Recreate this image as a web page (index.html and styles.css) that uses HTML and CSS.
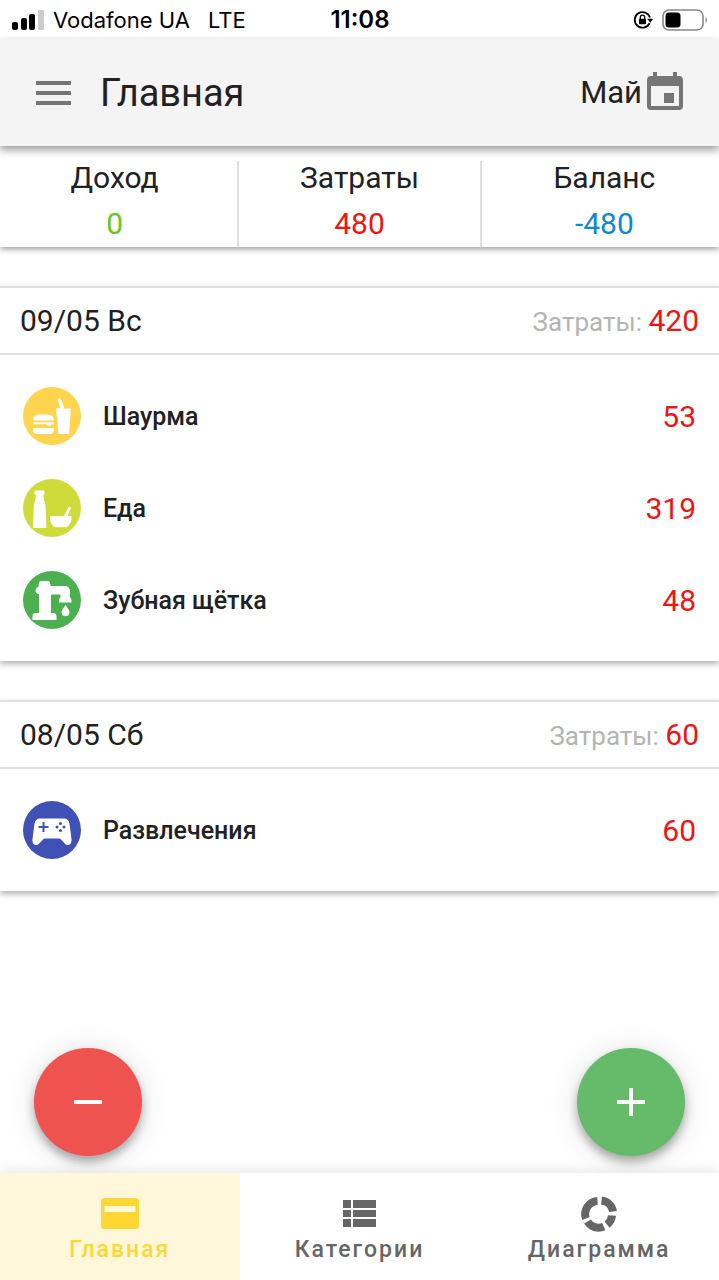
FILE: index.html
```html
<!DOCTYPE html>
<html lang="ru">
<head>
<meta charset="utf-8">
<meta name="viewport" content="width=device-width, initial-scale=1">
<title>Главная</title>
<link rel="stylesheet" href="styles.css">
</head>
<body>
<div class="app">
  <div class="status">
    <div class="status-side">
      <svg class="signal" viewBox="0 0 32 20" aria-hidden="true">
        <rect x="0" y="12" width="6" height="8" rx="2"/>
        <rect x="9" y="8" width="6" height="12" rx="2"/>
        <rect x="17" y="4" width="6" height="16" rx="2"/>
        <rect x="26" y="0" width="6" height="20" rx="1" fill="#ccc"/>
      </svg>
      <span>Vodafone UA</span>
      <span class="network">LTE</span>
    </div>
    <time class="clock">11:08</time>
    <div class="status-side status-end">
      <svg class="lock" viewBox="0 0 20 20" aria-hidden="true">
        <path d="M16.6 13.2A7.8 7.8 0 1 1 17 7.600" fill="none" stroke="#000" stroke-width="1.800"/>
        <path d="M14.200 8.800h6l-3 4z"/>
        <rect x="6" y="8.800" width="7" height="5.400" rx="1"/>
        <path d="M7.300 9V7.300a2.200 2.200 0 0 1 4.400 0V9" fill="none" stroke="#000" stroke-width="1.300"/>
      </svg>
      <svg class="battery" viewBox="0 0 46 22" aria-hidden="true">
        <rect x="1" y="1" width="40" height="20" rx="6" fill="none" stroke="#888" stroke-width="1.600"/>
        <rect x="3.500" y="3.500" width="15" height="15" rx="3.500"/>
        <path d="M43.500 8c1.800 1 1.800 5 0 6z" fill="#888"/>
      </svg>
    </div>
  </div>

  <header class="bar">
    <button class="menu" type="button" aria-label="Меню">
      <svg viewBox="0 0 36 24" aria-hidden="true"><path d="M0 0h35v4H0zM0 10h35v4H0zM0 20h35v4H0z"/></svg>
    </button>
    <h1 class="title">Главная</h1>
    <button class="month" type="button">
      <span>Май</span>
      <svg viewBox="0 0 36 40" aria-hidden="true"><path fill-rule="evenodd" d="M6 0h4v4h16V0h4v4h2a4 4 0 0 1 4 4v26a4 4 0 0 1-4 4H4a4 4 0 0 1-4-4V8a4 4 0 0 1 4-4h2zM4 14v20h28V14zM17 21h10v10H17z"/></svg>
    </button>
  </header>

  <section class="summary">
    <div class="total"><span>Доход</span><span class="income">0</span></div>
    <div class="total"><span>Затраты</span><span class="expense">480</span></div>
    <div class="total"><span>Баланс</span><span class="balance">-480</span></div>
  </section>

  <main class="days">
    <section class="day">
      <header class="day-head">
        <h2 class="date">09/05 Вс</h2>
        <p class="spent">Затраты: <span class="sum">420</span></p>
      </header>
      <ul class="items">
        <li class="item">
          <svg class="badge" viewBox="0 0 58 58" aria-hidden="true">
            <circle cx="29" cy="29" r="29" fill="#ffd54f"/>
            <g fill="#fff">
              <path d="M10 33.500c0-4 3-6 7-6h7c4 0 7 2 7 6zM10 35.200h21v2h-2.500l-2.500 2-3-2H10zM10 41h21v2c0 2.500-2 4-4 4H14c-2.500 0-4-1.500-4-4z"/>
              <path d="M33 21.500h4.500L35 13.500c-.5-2 2.300-2.800 3-1L41 20v1.500h7L46 47H35.500z"/>
            </g>
          </svg>
          <span class="name">Шаурма</span><span class="price">53</span>
        </li>
        <li class="item">
          <svg class="badge" viewBox="0 0 58 58" aria-hidden="true">
            <circle cx="29" cy="29" r="29" fill="#cddc39"/>
            <g fill="#fff">
              <path d="M11.500 11.500h10v4h-1v2.500l2 8.500L23.500 49H10l.8-22 2-9v-2.500h-1.300z"/>
              <path d="M27 37h14l4.200-8.500c1-1.500 3.200-.5 2.500 1.400L44.500 37H48.500c.5 6-2 9.500-5 11.300H32C28.500 46.500 26.500 43 27 37z"/>
            </g>
          </svg>
          <span class="name">Еда</span><span class="price">319</span>
        </li>
        <li class="item">
          <svg class="badge" viewBox="0 0 58 58" aria-hidden="true">
            <circle cx="29" cy="29" r="29" fill="#4caf50"/>
            <g fill="#fff">
              <path d="M17 10h9c1 1 1.500 3 1.500 5H41c4 0 6 2 6 5.500V26l1.500 2.500v3H36v-3l1.500-2.500v-2.500H28V42h2.500c2 0 3 1.500 3 3v4H9.500v-4c0-2 1-3 3-3H16V23c-2.500 0-3.500-1.500-3.500-3.500S14 16 15.500 16c0-2 .5-5 1.500-6z"/>
              <path d="M42.500 34c2 3 4 5 4 7.500 0 2.200-1.800 3.800-4 3.800s-4-1.600-4-3.800c0-2.500 2-4.500 4-7.500z"/>
            </g>
          </svg>
          <span class="name">Зубная щётка</span><span class="price">48</span>
        </li>
      </ul>
    </section>

    <section class="day">
      <header class="day-head">
        <h2 class="date">08/05 Сб</h2>
        <p class="spent">Затраты: <span class="sum">60</span></p>
      </header>
      <ul class="items">
        <li class="item">
          <svg class="badge" viewBox="0 0 58 58" aria-hidden="true">
            <circle cx="29" cy="29" r="29" fill="#3f51b5"/>
            <path fill="#fff" d="M17 17.500h24c3 0 5 2 5.500 5L48.500 38c.4 3-1 6-3.500 6s-3.500-1.500-4.500-3L37 37.500H21L17.500 41c-1.200 1.500-2 3-4.500 3s-4-3-3.500-6l2-15.500c.5-3 2.500-5 5.500-5z"/>
            <path d="M20.500 21v10M15.500 26h10" stroke="#3f51b5" stroke-width="2"/>
            <g fill="#3f51b5"><circle cx="37.500" cy="22.500" r="1.500"/><circle cx="34" cy="26" r="1.500"/><circle cx="41" cy="26" r="1.500"/><circle cx="37.500" cy="29.500" r="1.500"/></g>
          </svg>
          <span class="name">Развлечения</span><span class="price">60</span>
        </li>
      </ul>
    </section>
  </main>

  <div class="actions">
    <button class="fab fab-minus" type="button" aria-label="Добавить расход">
      <svg viewBox="0 0 28 28" aria-hidden="true"><path d="M0 12h28v4H0z"/></svg>
    </button>
    <button class="fab fab-plus" type="button" aria-label="Добавить доход">
      <svg viewBox="0 0 28 28" aria-hidden="true"><path d="M0 12h12V0h4v12h12v4H16v12h-4V16H0z"/></svg>
    </button>
  </div>

  <nav class="tabs">
    <a class="tab tab-active" href="#home" aria-current="page">
      <svg viewBox="0 0 40 36" aria-hidden="true"><path fill-rule="evenodd" d="M4.500 2h31a3.500 3.500 0 0 1 3.500 3.500v24a3.500 3.500 0 0 1-3.500 3.500h-31A3.500 3.500 0 0 1 1 29.500v-24A3.500 3.500 0 0 1 4.500 2zM4.500 10v6h31v-6z"/></svg>
      <span>Главная</span>
    </a>
    <a class="tab" href="#categories">
      <svg viewBox="0 0 40 36" aria-hidden="true"><path d="M4 4h8v8H4zM14 4h23v8H14zM4 14h8v7H4zM14 14h23v7H14zM4 23h8v8H4zM14 23h23v8H14z"/></svg>
      <span>Категории</span>
    </a>
    <a class="tab" href="#chart">
      <svg viewBox="0 0 40 36" aria-hidden="true">
        <g fill="none" stroke="#666" stroke-width="8">
          <path d="M22.500 4.500A13 13 0 0 1 34 15.500"/>
          <path d="M33 19.500A13 13 0 0 1 28 28.700"/>
          <path d="M24.800 30.600A13 13 0 0 1 8.500 25.500"/>
          <path d="M7 22.500A13 13 0 0 1 18.500 5"/>
        </g>
      </svg>
      <span>Диаграмма</span>
    </a>
  </nav>
</div>
</body>
</html>
```
FILE: styles.css
```css
* {
  box-sizing: border-box;
}

body {
  margin: 0;
  background: #fff;
  color: #212121;
  font-family: Roboto, "Noto Sans", sans-serif;
  font-size: 30px;
}

h1,
h2,
p,
ul {
  margin: 0;
  padding: 0;
  font-weight: 400;
}

button {
  padding: 0;
  border: 0;
  background: none;
  color: inherit;
  font: inherit;
  cursor: pointer;
}

svg {
  display: block;
  flex: none;
}

.app {
  display: flex;
  flex-direction: column;
  min-height: 100vh;
}

.status {
  display: flex;
  align-items: center;
  height: 39px;
  padding: 0 11px 0 12px;
  color: #000;
  font-family: Inter, Roboto, sans-serif;
  font-size: 22px;
}

.status-side {
  display: flex;
  flex: 1;
  align-items: center;
  gap: 9px;
}

.status-end {
  justify-content: flex-end;
}

.signal {
  width: 32px;
  height: 20px;
}

.network {
  margin-left: 9px;
}

.clock {
  font-size: 24px;
  font-weight: 600;
}

.lock {
  width: 20px;
  height: 20px;
}

.battery {
  width: 46px;
  height: 22px;
}

.bar {
  display: flex;
  position: relative;
  z-index: 1;
  align-items: center;
  height: 107px;
  padding: 0 36px;
  background: #f4f4f4;
  box-shadow: 0 4px 8px rgba(0, 0, 0, 0.4);
}

.menu svg {
  width: 36px;
  height: 24px;
  fill: #757575;
}

.title {
  flex: 1;
  margin-left: 28px;
  font-size: 38px;
}

.month {
  display: flex;
  align-items: center;
  font-size: 31px;
  gap: 5px;
}

.month svg {
  width: 36px;
  height: 40px;
  margin-bottom: 2px;
  fill: #757575;
}

.summary {
  display: grid;
  grid-template-columns: 1fr 34% 1fr;
  padding-top: 15px;
  box-shadow: 0 2px 6px rgba(0, 0, 0, 0.4);
}

.total {
  display: flex;
  flex-direction: column;
  align-items: center;
  padding-bottom: 6px;
  line-height: 34px;
  gap: 12px;
}

.total:first-child {
  padding-right: 8px;
}

.total:nth-child(2) {
  border: solid #e0e0e0;
  border-width: 0 2px;
}

.total:last-child {
  padding-left: 8px;
}

.income {
  color: #64c81e;
}

.expense,
.sum,
.price {
  color: #f01414;
}

.balance {
  color: #0f87d2;
}

.day {
  margin-top: 39px;
  border-top: 2px solid #e0e0e0;
  box-shadow: 0 3px 6px rgba(0, 0, 0, 0.3);
}

.day-head {
  display: flex;
  align-items: center;
  justify-content: space-between;
  height: 67px;
  padding: 0 20px;
  border-bottom: 2px solid #e0e0e0;
}

.date {
  font-size: 30px;
}

.spent {
  color: #b4b4b4;
  font-size: 26px;
}

.sum {
  font-size: 30px;
}

.items {
  padding: 15px 23px;
  list-style: none;
}

.item {
  display: flex;
  align-items: center;
  height: 92px;
}

.badge {
  width: 58px;
  height: 58px;
}

.name {
  flex: 1;
  margin-left: 22px;
  font-size: 25px;
  font-weight: 500;
}

.actions {
  display: flex;
  justify-content: space-between;
  margin-top: auto;
  padding: 0 34px 17px;
}

.fab {
  display: grid;
  place-items: center;
  width: 108px;
  height: 108px;
  border-radius: 50%;
  box-shadow: 0 6px 10px rgba(0, 0, 0, 0.3), 0 2px 32px rgba(0, 0, 0, 0.12);
}

.fab svg {
  width: 28px;
  height: 28px;
  fill: #fff;
}

.fab-minus {
  background: #ef5350;
}

.fab-plus {
  background: #66bb6a;
}

.tabs {
  display: grid;
  position: relative;
  grid-template-columns: repeat(3, 1fr);
  background: #fff;
  box-shadow: 0 -2px 12px rgba(0, 0, 0, 0.1);
}

.tab {
  display: flex;
  flex-direction: column;
  align-items: center;
  padding: 23px 0 16px;
  color: #666;
  font-size: 23px;
  font-weight: 500;
  letter-spacing: 2px;
  line-height: 28px;
  gap: 4px;
  text-decoration: none;
}

.tab svg {
  width: 40px;
  height: 36px;
  fill: currentColor;
}

.tab-active {
  background: #fff7da;
  color: #fdd835;
}
```
